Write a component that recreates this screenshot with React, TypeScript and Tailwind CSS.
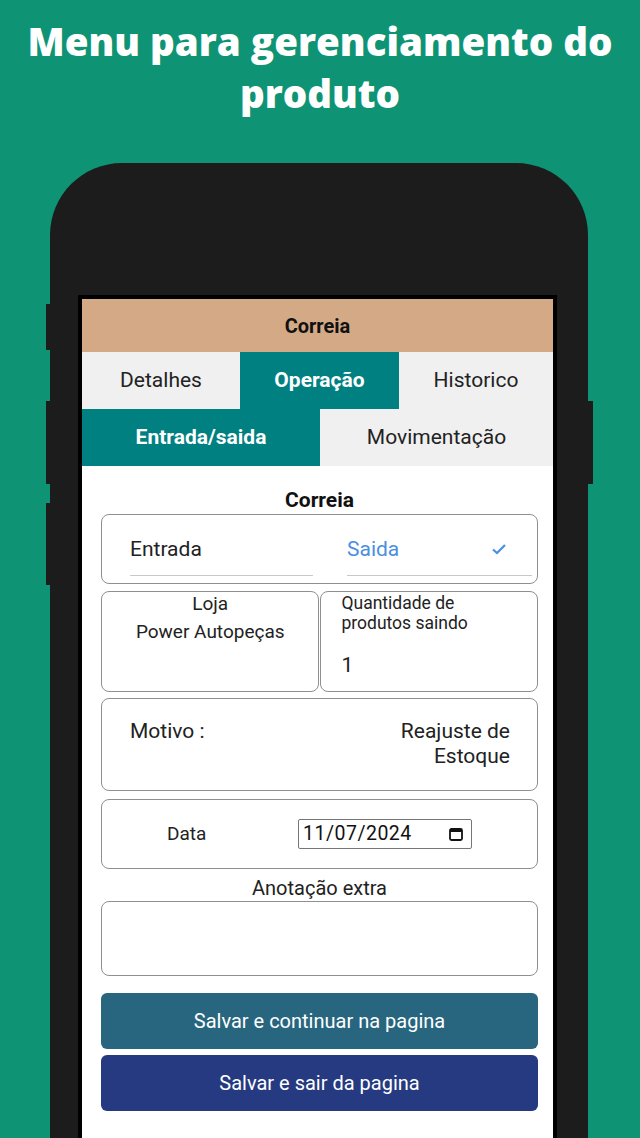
import React from "react";

function CalendarIcon() {
  return (
    <svg width="16" height="16" viewBox="0 0 16 16" fill="none">
      <rect x="2" y="3" width="12" height="11" rx="1.5" stroke="#111" strokeWidth="1.8" />
      <rect x="2" y="3" width="12" height="3" fill="#111" />
    </svg>
  );
}

export default function App() {
  return (
    <div
      className="w-[640px] h-[1138px] overflow-hidden bg-[#0e9474] flex flex-col"
      style={{ fontFamily: "Roboto, 'Liberation Sans', sans-serif" }}
    >
      <h1
        className="pt-[15px] text-center text-white text-[38.5px] leading-[52px] font-extrabold"
        style={{ fontFamily: "'Open Sans', 'Liberation Sans', sans-serif" }}
      >
        Menu para gerenciamento do
        <br />
        produto
      </h1>

      <div className="relative ml-[50px] mt-[44px] w-[538px] flex-1 rounded-t-[72px] bg-[#1c1c1c]">
        {/* side buttons */}
        <div className="absolute left-[-4px] top-[141px] h-[46px] w-[4px] bg-[#1c1c1c]" />
        <div className="absolute left-[-4px] top-[238px] h-[83px] w-[4px] bg-[#1c1c1c]" />
        <div className="absolute left-[-4px] top-[340px] h-[82px] w-[4px] bg-[#1c1c1c]" />
        <div className="absolute right-[-5px] top-[238px] h-[83px] w-[5px] bg-[#1c1c1c]" />

        <div className="ml-[28px] mt-[132px] w-[479px] border-4 border-b-0 border-black bg-white">
          <div className="h-[53px] bg-[#d4a985] flex items-center justify-center text-[20px] font-bold text-[#111]">
            Correia
          </div>
          <div className="grid grid-cols-[158px_159px_154px] h-[57px] text-[21px]">
            <div className="bg-[#f0f0f0] flex items-center justify-center text-[#222]">Detalhes</div>
            <div className="bg-[#008080] flex items-center justify-center text-white font-bold">Operação</div>
            <div className="bg-[#f0f0f0] flex items-center justify-center text-[#222]">Historico</div>
          </div>
          <div className="grid grid-cols-[238px_233px] h-[57px] text-[21px]">
            <div className="bg-[#008080] flex items-center justify-center text-white font-bold">Entrada/saida</div>
            <div className="bg-[#f0f0f0] flex items-center justify-center text-[#222]">Movimentação</div>
          </div>

          <div className="pl-[19px] pr-[15px] pb-[40px] flex flex-col">
            <div className="h-[48px] flex items-end justify-center pb-[1px] text-[21px] leading-[26px] font-bold text-[#111]">
              Correia
            </div>

            <div className="h-[70px] rounded-[8px] border border-[#8f8f8f] flex pl-[28px] pr-[5px] gap-[34px]">
              <div className="w-[183px] flex flex-col justify-end">
                <div className="text-[21px] text-[#222] leading-[24px] pb-[14px]">Entrada</div>
                <div className="h-[1px] bg-[#c8c8c8] mb-[7px]" />
              </div>
              <div className="w-[185px] flex flex-col justify-end">
                <div className="flex items-center justify-between pr-[25px] text-[21px] leading-[24px] pb-[14px] text-[#4a8fe0]">
                  <span>Saida</span>
                  <svg width="16" height="14" viewBox="0 0 16 14" fill="none">
                    <path d="M2 7.5 L6 11 L14 3" stroke="#4a8fe0" strokeWidth="2.2" />
                  </svg>
                </div>
                <div className="h-[1px] bg-[#c8c8c8] mb-[7px]" />
              </div>
            </div>

            <div className="mt-[7px] flex gap-[1px] h-[101px]">
              <div className="w-[219px] rounded-[8px] border border-[#8f8f8f] flex flex-col items-center text-[#222]">
                <div className="text-[19px] leading-[24px]">Loja</div>
                <div className="text-[19px] leading-[24px] mt-[4px]">Power Autopeças</div>
              </div>
              <div className="w-[218px] rounded-[8px] border border-[#8f8f8f] flex flex-col pl-[20px] pt-[1px] text-[#222]">
                <div className="text-[17.5px] leading-[20px]">Quantidade de</div>
                <div className="text-[17.5px] leading-[20px]">produtos saindo</div>
                <div className="text-[21px] leading-[24px] mt-[20px]">1</div>
              </div>
            </div>

            <div className="mt-[6px] h-[93px] rounded-[8px] border border-[#8f8f8f] flex justify-between pl-[28px] pr-[27px] pt-[20px] text-[21px] leading-[25px] text-[#222]">
              <div>Motivo :</div>
              <div className="text-right">
                Reajuste de
                <br />
                Estoque
              </div>
            </div>

            <div className="mt-[8px] h-[70px] rounded-[8px] border border-[#8f8f8f] flex items-center text-[#222]">
              <div className="ml-[65px] w-[131px] text-[19px]">Data</div>
              <div className="w-[174px] h-[30px] border border-[#767676] rounded-[2px] flex items-center justify-between pl-[4px] pr-[7px] text-[19.5px] text-[#111]">
                <span className="tracking-[0.5px]">11/07/2024</span>
                <CalendarIcon />
              </div>
            </div>

            <div className="mt-[8px] text-center text-[20px] leading-[22px] text-[#222]">Anotação extra</div>
            <div className="mt-[2px] h-[75px] rounded-[8px] border border-[#8f8f8f]" />

            <div className="mt-[17px] h-[56px] rounded-[6px] bg-[#28667f] flex items-center justify-center text-white text-[20px]">
              Salvar e continuar na pagina
            </div>
            <div className="mt-[6px] h-[56px] rounded-[6px] bg-[#253a80] flex items-center justify-center text-white text-[20px]">
              Salvar e sair da pagina
            </div>
          </div>
        </div>
      </div>
    </div>
  );
}
